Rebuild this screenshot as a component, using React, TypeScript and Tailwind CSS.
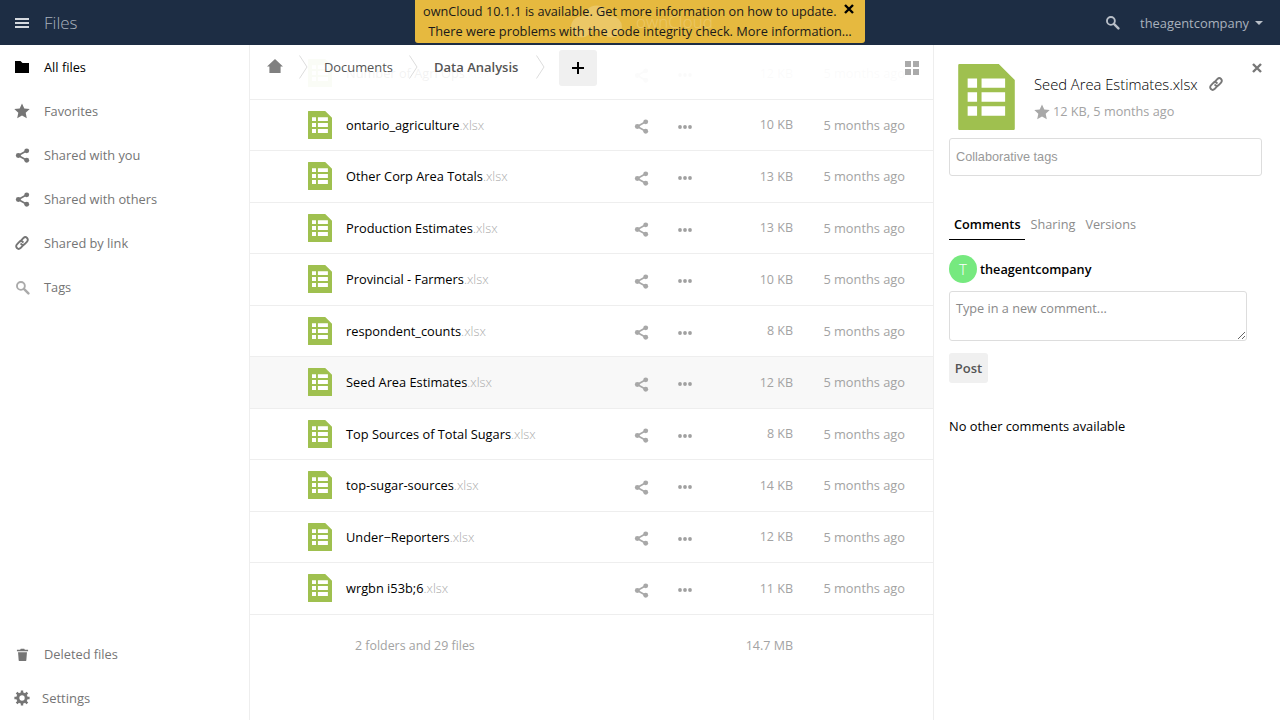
import React from "react";

type IconProps = { className?: string };

const ShareIcon = ({ className }: IconProps) => (
  <svg viewBox="0 0 16 16" className={className} fill="currentColor">
    <circle cx="3.5" cy="8" r="2.6" />
    <circle cx="12.5" cy="3" r="2.6" />
    <circle cx="12.5" cy="13" r="2.6" />
    <path d="M3.5 8 12.5 3M3.5 8l9 5" stroke="currentColor" strokeWidth="1.8" fill="none" />
  </svg>
);

const StarIcon = ({ className }: IconProps) => (
  <svg viewBox="0 0 16 16" className={className} fill="currentColor">
    <path d="M8 .5l2.3 5 5.4.6-4 3.7 1.1 5.4L8 12.5l-4.8 2.7 1.1-5.4-4-3.7 5.4-.6z" />
  </svg>
);

const LinkIcon = ({ className }: IconProps) => (
  <svg viewBox="1.5 1.5 13 13" className={className} fill="none" stroke="currentColor" strokeWidth="1.8" strokeLinecap="round">
    <path d="M6.6 6.2 9.4 3.3a2.4 2.4 0 0 1 3.3 0 2.4 2.4 0 0 1 0 3.4L10.5 9a2.4 2.4 0 0 1-3.3 0" />
    <path d="M9.4 9.8 6.6 12.7a2.4 2.4 0 0 1-3.3 0 2.4 2.4 0 0 1 0-3.4L5.5 7a2.4 2.4 0 0 1 3.3 0" />
  </svg>
);

const SearchIcon = ({ className }: IconProps) => (
  <svg viewBox="0 0 16 16" className={className} fill="none" stroke="currentColor">
    <circle cx="6.3" cy="6.3" r="4.2" strokeWidth="2" />
    <path d="M9.5 9.5 14.3 14.3" strokeWidth="2.6" strokeLinecap="round" />
  </svg>
);

const SheetIcon = ({ className }: IconProps) => (
  <svg viewBox="0 0 24 28" className={className}>
    <path d="M.5 0H17.2L24 6.8V27.5a.5.5 0 0 1-.5.5H.5a.5.5 0 0 1-.5-.5V.5A.5.5 0 0 1 .5 0z" fill="#9fc04f" />
    <path d="M4 6.2h4v3.9H4zM9.9 6.2h10v3.9h-10zM4 12h4v4H4zM9.9 12h10v4h-10zM4 17.9h4V22H4zM9.9 17.9h10V22h-10z" fill="#fff" />
  </svg>
);

const FolderIcon = ({ className }: IconProps) => (
  <svg viewBox="0 0 14 12" className={className} fill="currentColor">
    <path d="M0 0h5.5l2 2H14v10H0z" />
  </svg>
);

const TrashIcon = ({ className }: IconProps) => (
  <svg viewBox="0 0 14 14" className={className} fill="currentColor">
    <path d="M1 2h3.5l.6-1.2h3.8L9.5 2H13v1.5H1zM2.2 4.5h9.6l-.7 9a.6.6 0 0 1-.6.5H3.5a.6.6 0 0 1-.6-.5z" />
  </svg>
);

const GearIcon = ({ className }: IconProps) => (
  <svg viewBox="0 0 16 16" className={className} fill="none" stroke="currentColor">
    <circle cx="8" cy="8" r="4.2" strokeWidth="3" />
    <path
      d="M8 .4v3M8 12.6v3M.4 8h3M12.6 8h3M2.6 2.6l2.1 2.1M11.3 11.3l2.1 2.1M13.4 2.6l-2.1 2.1M4.7 11.3l-2.1 2.1"
      strokeWidth="2.4"
    />
  </svg>
);

const HomeIcon = ({ className }: IconProps) => (
  <svg viewBox="0 0 16 14" className={className} fill="currentColor">
    <path d="M8 0 16 7.4H13.6V14H2.4V7.4H0z" />
  </svg>
);

const Crumb = () => (
  <svg viewBox="0 0 9 24" className="w-[9px] h-[24px] shrink-0" fill="none" stroke="#dcdcdc">
    <path d="M.5.5 8 12 .5 23.5" />
  </svg>
);

const NAV_ITEMS = [
  { label: "Favorites", icon: <StarIcon className="w-[16px] h-[16px] shrink-0" /> },
  { label: "Shared with you", icon: <ShareIcon className="w-[15px] h-[15px] shrink-0" /> },
  { label: "Shared with others", icon: <ShareIcon className="w-[15px] h-[15px] shrink-0" /> },
  { label: "Shared by link", icon: <LinkIcon className="w-[14px] h-[14px] shrink-0" /> },
  { label: "Tags", icon: <SearchIcon className="w-[15px] h-[15px] shrink-0 text-[#aaaaaa]" /> },
];

const FILES = [
  { name: "Number of Agri Ops", size: "12 KB" },
  { name: "ontario_agriculture", size: "10 KB" },
  { name: "Other Corp Area Totals", size: "13 KB" },
  { name: "Production Estimates", size: "13 KB" },
  { name: "Provincial - Farmers", size: "10 KB" },
  { name: "respondent_counts", size: "8 KB" },
  { name: "Seed Area Estimates", size: "12 KB", selected: true },
  { name: "Top Sources of Total Sugars", size: "8 KB" },
  { name: "top-sugar-sources", size: "14 KB" },
  { name: "Under−Reporters", size: "12 KB" },
  { name: "wrgbn i53b;6", size: "11 KB" },
];

function Header() {
  return (
    <header className="h-[45px] shrink-0 bg-[#1d2d44] flex items-center justify-between pl-[15px] pr-[17px]">
      <div className="flex items-center">
        <svg viewBox="0 0 14 10" className="w-[14px] h-[10px] text-[#d5d9df]" fill="currentColor">
          <path d="M0 0h14v2H0zM0 4h14v2H0zM0 8h14v2H0z" />
        </svg>
        <span className="ml-[15px] text-[17px] font-light text-[#a9b1bc]">Files</span>
      </div>
      <div className="flex items-center">
        <SearchIcon className="w-[15px] h-[15px] text-[#b9bfc8]" />
        <span className="ml-[20px] mt-[2px] text-[12.9px] text-[#a9b1bc]">theagentcompany</span>
        <span className="ml-[6px] mt-[1px] w-0 h-0 border-x-[4px] border-x-transparent border-t-[4px] border-t-[#b9bfc8]" />
      </div>
    </header>
  );
}

function UpdateBanner() {
  return (
    <div className="absolute left-[415px] top-0 w-[450px] h-[43px] bg-[#e6b93f] rounded-b-[3px] text-[#1a1a1a] overflow-hidden">
      <div className="absolute left-[155px] top-[5px] flex items-center opacity-20">
        <svg viewBox="0 0 50 30" className="w-[53px] h-[33px]" fill="#fff">
          <circle cx="25" cy="12" r="12" />
          <circle cx="11" cy="20" r="10" />
          <circle cx="39" cy="20" r="10" />
        </svg>
        <span className="ml-[13px] text-[17px] font-light text-white">ownCloud</span>
      </div>
      <div className="relative pt-[1px] leading-[20px]">
        <div className="h-[20px] pl-[8px] text-[12.7px]">
          ownCloud 10.1.1 is available. Get more information on how to update.
        </div>
        <div className="h-[20px] text-center text-[12.8px]">There were problems with the code integrity check. More information…</div>
      </div>
      <svg viewBox="0 0 10 10" className="absolute right-[11px] top-[4px] w-[10px] h-[10px]" stroke="#000" strokeWidth="2.4">
        <path d="M1 1l8 8M9 1l-8 8" />
      </svg>
    </div>
  );
}

function Sidebar() {
  return (
    <aside className="w-[250px] shrink-0 border-r border-[#eeeeee] flex flex-col justify-between text-[12.8px] text-[#757575]">
      <nav>
        <div className="h-[44px] flex items-center pl-[15px] text-black">
          <FolderIcon className="w-[14px] h-[12px]" />
          <span className="ml-[15px] mt-[2px]">All files</span>
        </div>
        {NAV_ITEMS.map((item) => (
          <div key={item.label} className="h-[44px] flex items-center pl-[14px]">
            <span className="w-[16px] flex justify-center">{item.icon}</span>
            <span className="ml-[14px] mt-[2px]">{item.label}</span>
          </div>
        ))}
      </nav>
      <div>
        <div className="h-[44px] flex items-center pl-[16px]">
          <TrashIcon className="w-[13px] h-[15px]" />
          <span className="ml-[15px] mt-[2px]">Deleted files</span>
        </div>
        <div className="h-[44px] flex items-center pl-[14px]">
          <GearIcon className="w-[16px] h-[16px]" />
          <span className="ml-[12px] mt-[2px] text-[13px]">Settings</span>
        </div>
      </div>
    </aside>
  );
}

function Breadcrumbs() {
  return (
    <div className="absolute left-0 right-0 top-0 h-[44px] bg-white/95 flex items-center text-[13px] pl-[17px] pr-[14px]">
      <HomeIcon className="w-[16px] h-[14px] text-[#808080] -mt-[2px]" />
      <span className="ml-[16px]"><Crumb /></span>
      <span className="ml-[16px] mt-[2px] w-[69px] whitespace-nowrap text-[12.9px] text-[#555555]">Documents</span>
      <span className="ml-[16px]"><Crumb /></span>
      <span className="ml-[16px] mt-[2px] w-[86px] whitespace-nowrap font-semibold text-[#555555]">Data Analysis</span>
      <span className="ml-[16px]"><Crumb /></span>
      <button className="ml-[14px] w-[38px] h-[36px] mt-[1px] rounded-[3px] bg-[#f0f0f0] flex items-center justify-center">
        <svg viewBox="0 0 12 12" className="w-[12px] h-[12px]" stroke="#000" strokeWidth="2">
          <path d="M6 0v12M0 6h12" />
        </svg>
      </button>
      <svg viewBox="0 0 14 14" className="ml-auto w-[14px] h-[14px] mt-[2px]" fill="#aaaaaa">
        <path d="M0 0h6v6H0zM8 0h6v6H8zM0 8h6v6H0zM8 8h6v6H8z" />
      </svg>
    </div>
  );
}

function FileRow({ name, size, selected }: { name: string; size: string; selected?: boolean }) {
  return (
    <div className={`h-[51.5px] border-b border-[#eeeeee] flex items-center text-[12.8px] ${selected ? "bg-[#f8f8f8]" : ""}`}>
      <SheetIcon className="ml-[58px] w-[24px] h-[28px] shrink-0" />
      <div className="ml-[14px] mt-[1px] flex-1 min-w-0 text-black">
        {name}
        <span className="text-[#aaaaaa] font-light">.xlsx</span>
      </div>
      <ShareIcon className="w-[15px] h-[15px] mt-[4px] text-[#a8a8a8] shrink-0" />
      <svg viewBox="0 0 14 4" className="ml-[29px] w-[14px] h-[4px] mt-[4px] shrink-0" fill="#a0a0a0">
        <circle cx="2" cy="2" r="1.9" />
        <circle cx="7" cy="2" r="1.9" />
        <circle cx="12" cy="2" r="1.9" />
      </svg>
      <div className="w-[101px] mt-[2px] text-right text-[12.5px] text-[#a3a3a3]">{size}</div>
      <div className="w-[112px] mt-[1px] text-right text-[#a3a3a3]">5 months ago</div>
      <div className="w-[28px] shrink-0" />
    </div>
  );
}

function FileList() {
  return (
    <main className="relative flex-1 min-w-0 overflow-hidden">
      <div className="pt-[3px]">
        {FILES.map((f) => (
          <FileRow key={f.name} {...f} />
        ))}
        <div className="h-[61px] flex items-center text-[12.4px] text-[#a3a3a3]">
          <span className="ml-[105px] mt-[2px]">2 folders and 29 files</span>
          <span className="ml-auto mr-[140px] mt-[2px] text-[12.5px]">14.7 MB</span>
        </div>
      </div>
      <Breadcrumbs />
    </main>
  );
}

function DetailsPanel() {
  return (
    <aside className="relative w-[347px] shrink-0 border-l border-[#eeeeee] pl-[15px] pr-[18px] text-[12.7px]">
      <svg viewBox="0 0 10 10" className="absolute right-[18px] top-[18px] w-[10px] h-[10px]" stroke="#777777" strokeWidth="2.4">
        <path d="M1 1l8 8M9 1l-8 8" />
      </svg>
      <div className="flex pt-[19px] pl-[9px] h-[93px]">
        <SheetIcon className="w-[57px] h-[66px] shrink-0" />
        <div className="ml-[19px] pt-[9px]">
          <div className="flex items-center h-[22px]">
            <span className="text-[14.75px] font-light text-black">Seed Area Estimates.xlsx</span>
            <LinkIcon className="ml-[11px] w-[14px] h-[14px] text-[#777777]" />
          </div>
          <div className="flex items-center mt-[7px] text-[#a3a3a3]">
            <StarIcon className="w-[16px] h-[16px] text-[#a8a8a8]" />
            <span className="ml-[3px]">12 KB, 5 months ago</span>
          </div>
        </div>
      </div>
      <input
        readOnly
        placeholder="Collaborative tags"
        className="block w-full h-[38px] border border-[#dddddd] rounded-[3px] px-[6px] text-[12.7px] font-['Liberation_Sans',sans-serif] placeholder:text-[#999999] outline-none"
      />
      <div className="flex mt-[38px] h-[26px]">
        <div className="h-[26px] pt-[1px] pl-[5px] pr-[4px] border-b border-black font-semibold text-black">Comments</div>
        <div className="pt-[1px] pl-[6px] pr-[5px] text-[#8c8c8c]">Sharing</div>
        <div className="pt-[1px] px-[5px] text-[#8c8c8c]">Versions</div>
      </div>
      <div className="flex items-center mt-[15px]">
        <div className="w-[28px] h-[28px] rounded-full bg-[#76e97f] text-white text-[15px] font-light flex items-center justify-center">T</div>
        <span className="ml-[3px] mt-[2px] font-semibold text-black">theagentcompany</span>
      </div>
      <textarea
        readOnly
        placeholder="Type in a new comment..."
        className="block mt-[8px] w-[298px] h-[50px] border border-[#dddddd] rounded-[3px] px-[6px] pt-[7px] pb-[5px] text-[12.7px] leading-[18px] placeholder:text-[#8a8a8a] outline-none"
      />
      <button className="block mt-[12px] w-[39px] h-[30px] pt-[2px] rounded-[3px] bg-[#f0f0f0] font-semibold text-[13px] text-[#555555]">Post</button>
      <div className="mt-[34px] text-[12.85px] text-black">No other comments available</div>
    </aside>
  );
}

export default function App() {
  return (
    <div className="relative h-screen w-full flex flex-col overflow-hidden bg-white font-['Open_Sans',sans-serif]">
      <Header />
      <div className="flex flex-1 min-h-0">
        <Sidebar />
        <FileList />
        <DetailsPanel />
      </div>
      <UpdateBanner />
    </div>
  );
}
